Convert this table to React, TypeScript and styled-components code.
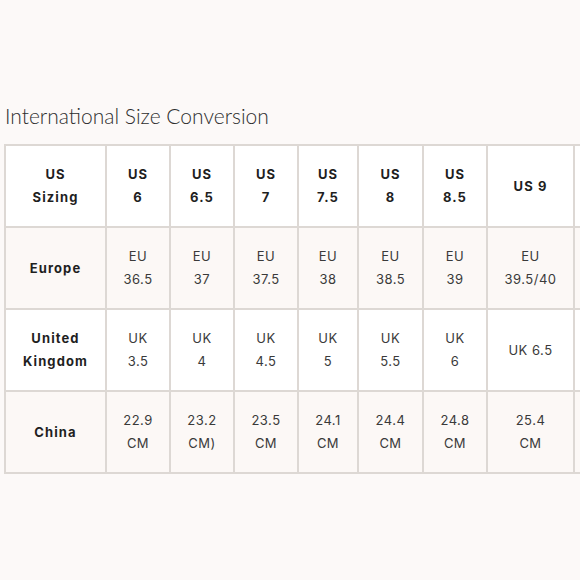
import styled, { createGlobalStyle } from 'styled-components';

const GlobalStyle = createGlobalStyle`
  html, body {
    margin: 0;
    padding: 0;
    background: #fcf9f8;
  }
  body {
    width: 580px;
    height: 580px;
    overflow: hidden;
  }
`;

const Page = styled.main`
  padding: 103px 0 0 4px;
  width: 576px;
  overflow: hidden;
`;

const Title = styled.h2`
  margin: 0 0 15px 1px;
  font-family: Lato, 'Liberation Sans', sans-serif;
  font-weight: 300;
  font-size: 21px;
  line-height: 26px;
  color: #2e2e2e;
`;

const Grid = styled.div`
  display: grid;
  grid-template-columns: 99px 62px 62px 62px 58px 63px 62px 85px 85px;
  grid-auto-rows: 80px;
  gap: 2px;
  padding: 2px;
  width: max-content;
  background: #ddd8d4;
`;

const Cell = styled.div<{ $tint?: boolean; $head?: boolean }>`
  display: flex;
  flex-direction: column;
  align-items: center;
  justify-content: center;
  background: ${(p) => (p.$tint ? '#fcf8f6' : '#ffffff')};
  font-family: Inter, 'Liberation Sans', sans-serif;
  font-size: 13px;
  line-height: 23px;
  text-align: center;
  color: ${(p) => (p.$head ? '#1f1f1f' : '#3a3a3a')};
  font-weight: ${(p) => (p.$head ? 700 : 400)};
  letter-spacing: ${(p) => (p.$head ? '1.1px' : '0.5px')};
  span {
    display: block;
  }
`;

type Row = { label: string[]; cells: string[][]; tint: boolean; head: boolean };

// the ninth column runs past the right edge of the frame, so it stays empty
const rows: Row[] = [
  {
    label: ['US', 'Sizing'],
    cells: [['US', '6'], ['US', '6.5'], ['US', '7'], ['US', '7.5'], ['US', '8'], ['US', '8.5'], ['US 9'], []],
    tint: false,
    head: true,
  },
  {
    label: ['Europe'],
    cells: [['EU', '36.5'], ['EU', '37'], ['EU', '37.5'], ['EU', '38'], ['EU', '38.5'], ['EU', '39'], ['EU', '39.5/40'], []],
    tint: true,
    head: false,
  },
  {
    label: ['United', 'Kingdom'],
    cells: [['UK', '3.5'], ['UK', '4'], ['UK', '4.5'], ['UK', '5'], ['UK', '5.5'], ['UK', '6'], ['UK 6.5'], []],
    tint: false,
    head: false,
  },
  {
    label: ['China'],
    cells: [['22.9', 'CM'], ['23.2', 'CM)'], ['23.5', 'CM'], ['24.1', 'CM'], ['24.4', 'CM'], ['24.8', 'CM'], ['25.4', 'CM'], []],
    tint: true,
    head: false,
  },
];

const App = () => {
  return (
    <>
      <GlobalStyle />
      <Page>
        <Title>International Size Conversion</Title>
        <Grid>
          {rows.map((r, i) => (
            <>
              <Cell key={`l${i}`} $tint={r.tint} $head>
                {r.label.map((t) => (
                  <span key={t}>{t}</span>
                ))}
              </Cell>
              {r.cells.map((c, j) => (
                <Cell key={`c${i}-${j}`} $tint={r.tint} $head={r.head}>
                  {c.map((t) => (
                    <span key={t}>{t}</span>
                  ))}
                </Cell>
              ))}
            </>
          ))}
        </Grid>
      </Page>
    </>
  );
};

export default App;
